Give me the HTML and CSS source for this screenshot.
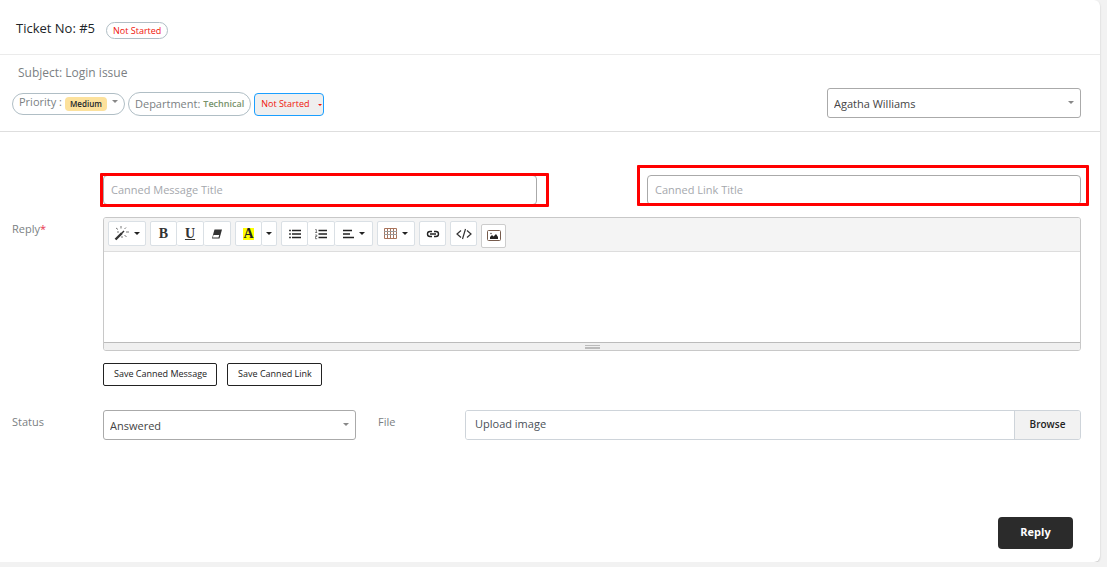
FILE: index.html
```html
<!DOCTYPE html>
<html lang="en">
<head>
  <meta charset="UTF-8" />
  <meta name="viewport" content="width=device-width, initial-scale=1" />
  <title>Ticket No: #5</title>
  <link rel="stylesheet" href="styles.css">
</head>
<body>
  <main class="card">
    <header class="card-header">
      <h1>Ticket No: #5</h1>
      <span class="pill-status">Not Started</span>
    </header>

    <section class="ticket-info">
      <div>
        <p class="subject">Subject: Login issue</p>
        <div class="ticket-meta">
          <div class="pill pill-priority">
            <label for="priority">Priority :</label>
            <span class="caret-wrap">
              <select id="priority" class="priority-select"><option>Medium</option></select>
            </span>
          </div>
          <div class="pill pill-department">Department: <span>Technical</span></div>
          <span class="caret-wrap caret-red">
            <select class="state-select" aria-label="Ticket state"><option>Not Started</option></select>
          </span>
        </div>
      </div>
      <span class="caret-wrap assignee">
        <select class="form-select" aria-label="Assignee"><option>Agatha Williams</option></select>
      </span>
    </section>

    <form class="reply-form">
      <div class="canned-row">
        <div class="marked marked-message">
          <input class="form-control" type="text" placeholder="Canned Message Title" aria-label="Canned Message Title">
        </div>
        <div class="marked marked-link">
          <input class="form-control" type="text" placeholder="Canned Link Title" aria-label="Canned Link Title">
        </div>
      </div>

      <div class="form-row">
        <label for="reply">Reply<span class="required">*</span></label>
        <div class="editor">
          <div class="toolbar">
            <div class="btn-group">
              <button type="button" class="wide" aria-label="Style">
                <svg width="15" height="15" viewBox="0 0 15 15"><path d="M1.5 13.5 8 7" stroke="#333" stroke-width="2.4"/><path d="M8 7l2-2" stroke="#333" stroke-width="1.4"/><path d="M7 0v2.500M2 2l2 1.500M12 1.500l-1.500 1.500M12 6h3M10.500 9l2 2M8 10v2M3 6h2" stroke="#777" stroke-width="1"/></svg>
                <i class="caret"></i>
              </button>
            </div>
            <div class="btn-group">
              <button type="button" class="letter" aria-label="Bold">B</button>
              <button type="button" class="letter underline" aria-label="Underline">U</button>
              <button type="button" aria-label="Clear formatting">
                <svg width="12" height="12" viewBox="0 0 12 12"><path d="M3.500 1.500H11L8.500 10.500H1z" fill="#333"/><path d="M2.500 7h5.700l-.7 2.500H1.900z" fill="#fff"/></svg>
              </button>
            </div>
            <div class="btn-group">
              <button type="button" class="letter" aria-label="Text color"><span class="highlight">A</span></button>
              <button type="button" class="narrow" aria-label="More colors"><i class="caret"></i></button>
            </div>
            <div class="btn-group">
              <button type="button" aria-label="Bullet list">
                <svg width="12" height="12" viewBox="0 0 12 12"><path d="M3 2.500h9M3 6h9M3 9.500h9" stroke="#222" stroke-width="1.600"/><path d="M0 2.500h2M0 6h2M0 9.500h2" stroke="#444" stroke-width="1.600"/></svg>
              </button>
              <button type="button" aria-label="Numbered list">
                <svg width="12" height="12" viewBox="0 0 12 12"><path d="M3.500 2.500H12M3.500 6H12M3.500 9.500H12" stroke="#222" stroke-width="1.600"/><path d="M.3 1.500h1v3M.2 4.500h2M.2 7h1.600v1.500H.4v2.200h1.800" fill="none" stroke="#555" stroke-width=".8"/></svg>
              </button>
              <button type="button" class="wide" aria-label="Paragraph">
                <svg width="12" height="12" viewBox="0 0 12 12"><path d="M1 2.500h9M1 6h7M1 9.500h11" stroke="#222" stroke-width="1.500"/></svg>
                <i class="caret"></i>
              </button>
            </div>
            <div class="btn-group">
              <button type="button" class="wide" aria-label="Table">
                <svg width="13" height="12" viewBox="0 0 13 12"><path d="M.5 .5h12v10H.5zM3.500 .5v10M6.500 .5v10M9.500 .5v10" fill="none" stroke="#a9745c"/><path d="M0 3.500h13M0 6.500h13" stroke="#999"/></svg>
                <i class="caret"></i>
              </button>
            </div>
            <div class="btn-group">
              <button type="button" aria-label="Link">
                <svg width="14" height="12" viewBox="0 0 14 12"><path d="M6 3.500H4a2.500 2.500 0 0 0 0 5h2M8 3.500h2a2.500 2.500 0 0 1 0 5H8M4 6h6" fill="none" stroke="#222" stroke-width="1.400"/></svg>
              </button>
            </div>
            <div class="btn-group">
              <button type="button" aria-label="Code view">
                <svg width="16" height="12" viewBox="0 0 16 12"><path d="M5 2.500 1 6l4 3.500M11 2.500 15 6l-4 3.500M9.500 1 6.500 11" fill="none" stroke="#333" stroke-width="1.200"/></svg>
              </button>
            </div>
            <div class="btn-group picture-group">
              <button type="button" aria-label="Picture">
                <svg width="14" height="12" viewBox="0 0 14 12"><rect x=".5" y=".5" width="13" height="10" rx="1" fill="#fff" stroke="#765b4c"/><path d="M3 9V7l2-2 1.500 1.500L9 4l2 3v2z" fill="#222"/><circle cx="4" cy="3.500" r=".8" fill="#555"/></svg>
              </button>
            </div>
          </div>
          <textarea id="reply"></textarea>
          <div class="resize-bar"><span></span></div>
        </div>
      </div>

      <div class="canned-actions">
        <button type="button">Save Canned Message</button>
        <button type="button">Save Canned Link</button>
      </div>

      <div class="status-row">
        <label for="status">Status</label>
        <span class="caret-wrap">
          <select id="status" class="form-select"><option>Answered</option></select>
        </span>
        <label class="file-label" for="file">File</label>
        <div class="file-field">
          <input id="file" type="text" value="Upload image" readonly>
          <button type="button">Browse</button>
        </div>
      </div>

      <div class="form-footer">
        <button type="submit" class="btn-reply">Reply</button>
      </div>
    </form>
  </main>
</body>
</html>
```
FILE: styles.css
```css
* {
  box-sizing: border-box;
}
body {
  margin: 0;
  background: #f2f2f2;
  color: #7b7f83;
  font-family: "Open Sans", sans-serif;
  font-size: 11px;
  line-height: 16px;
}
button, input, select, textarea {
  font: inherit;
  margin: 0;
}
.card {
  margin-right: 7px;
  background: #fff;
  border-radius: 0 6px 6px 0;
  box-shadow: 0 1px 2px rgba(0, 0, 0, 0.2);
}
.card-header {
  display: flex;
  align-items: center;
  gap: 11px;
  height: 55px;
  padding: 2px 16px 0;
  border-bottom: 1px solid #ebebeb;
}
h1 {
  margin: 0;
  color: #212529;
  font-size: 13px;
  font-weight: 400;
  line-height: 20px;
}
.pill-status {
  margin-top: 4px;
  padding: 0 6px;
  border: 1px solid #b0bec5;
  border-radius: 9px;
  color: #f0140a;
  font-size: 9px;
  line-height: 15px;
}

/* ticket details */
.ticket-info {
  display: flex;
  justify-content: space-between;
  align-items: flex-end;
  padding: 8px 19px 13px 12px;
  border-bottom: 1px solid #dedede;
}
.subject {
  margin: 0 0 9px;
  padding-left: 6px;
  font-size: 12px;
  line-height: 20px;
}
.ticket-meta {
  display: flex;
  align-items: center;
  gap: 3px;
  margin-bottom: 2px;
}
.pill {
  display: flex;
  align-items: center;
  border: 1px solid #b0bec5;
  border-radius: 12px;
  font-weight: 500;
}
.pill-priority {
  gap: 3px;
  height: 22px;
  padding: 0 5px 4px 6px;
}
.pill-department {
  gap: 3px;
  height: 24px;
  padding: 0 6px;
}
.pill-department span {
  color: #77926b;
  font-size: 9px;
  font-weight: 600;
}
.caret-wrap {
  position: relative;
  display: flex;
}
.caret-wrap::after {
  content: "";
  position: absolute;
  top: 50%;
  right: 7px;
  margin-top: -2px;
  border: 3px solid transparent;
  border-top-color: #888;
  border-bottom: 0;
  pointer-events: none;
}
.caret-red::after {
  right: 2px;
  margin-top: 0;
  border-width: 2px;
  border-bottom: 0;
  border-top-color: #f0140a;
}
select {
  appearance: none;
}
.priority-select {
  height: 14px;
  margin: 3px 12px 0 0;
  padding: 0 5px;
  border: 0;
  border-radius: 4px;
  background: #fce19c;
  color: #212529;
  font-size: 8px;
  font-weight: 600;
  line-height: 14px;
}
.pill-priority .caret-wrap::after {
  right: 1px;
}
.state-select {
  height: 23px;
  padding: 0 13px 0 6px;
  border: 1px solid #1a9fff;
  border-radius: 4px;
  background: #efefef;
  color: #f0140a;
  font-size: 9px;
}
.form-select {
  width: 100%;
  height: 30px;
  padding: 1px 20px 0 6px;
  border: 1px solid #aaa;
  border-radius: 3px;
  background: #fff;
  color: #444;
}
.assignee {
  width: 254px;
}

/* reply form */
.reply-form {
  padding: 43px 19px 13px 12px;
}
.canned-row {
  display: grid;
  grid-template-columns: 1fr 1fr;
  gap: 110px;
  margin: 0 0 12px 91px;
}
.marked {
  position: relative;
}
.marked::after {
  content: "";
  position: absolute;
  border: 3px solid #f00;
  border-radius: 1px;
  pointer-events: none;
}
.marked-message::after {
  inset: -2px -12px -2px -3px;
}
.marked-link::after {
  inset: -10px -8px -1px -10px;
}
.form-control {
  display: block;
  width: 100%;
  height: 30px;
  padding: 0 7px 2px;
  border: 1px solid #aaa;
  border-radius: 4px;
  background: #fff;
  color: #444;
}
.form-control::placeholder {
  color: #a5a8ad;
}
.form-row {
  display: grid;
  grid-template-columns: 91px 1fr;
}
.form-row label {
  padding-top: 4px;
}
.required {
  color: #e8344e;
}
.editor {
  border: 1px solid #c8c8c8;
  border-radius: 3px;
  overflow: hidden;
}
.toolbar {
  display: flex;
  gap: 4px;
  height: 34px;
  padding: 3px 4px;
  background: #f4f4f4;
  border-bottom: 1px solid #ddd;
}
.btn-group {
  display: flex;
  height: 25px;
}
.btn-group button {
  display: flex;
  align-items: center;
  justify-content: center;
  width: 27px;
  padding: 0;
  border: 1px solid #dae0e5;
  border-radius: 2px;
  background: #fff;
  color: #333;
}
.btn-group button + button {
  border-left: 0;
}
.btn-group .wide {
  gap: 5px;
  width: 38px;
}
.btn-group .narrow {
  width: 15px;
}
.btn-group .letter {
  font-family: "Liberation Serif", serif;
  font-size: 14px;
  font-weight: 700;
}
.btn-group .underline {
  text-decoration: underline;
}
.highlight {
  background: #ff0;
  color: #222;
  line-height: 12px;
}
.caret {
  border: 3px solid transparent;
  border-top-color: #222;
  border-bottom: 0;
}
.picture-group {
  margin-top: 3px;
}
.picture-group button {
  width: 25px;
  height: 24px;
  border-color: #ccc;
}
textarea {
  display: block;
  width: 100%;
  height: 90px;
  padding: 10px;
  border: 0;
  resize: none;
  outline: 0;
}
.resize-bar {
  display: flex;
  justify-content: center;
  height: 8px;
  padding-top: 2px;
  border-top: 1px solid #bbb;
  background: #f0f0f0;
}
.resize-bar span {
  width: 15px;
  height: 4px;
  border: solid #bbb;
  border-width: 1px 0 2px;
}
.canned-actions {
  display: flex;
  gap: 10px;
  margin: 12px 0 24px 91px;
}
.canned-actions button {
  height: 23px;
  padding: 0 9px 2px 10px;
  border: 1px solid #222;
  border-radius: 2px;
  background: #fff;
  color: #222;
  font-size: 9px;
}
.status-row {
  display: grid;
  grid-template-columns: 91px 253fr 109px 616fr;
}
.status-row label {
  padding-top: 4px;
}
.status-row .file-label {
  padding-left: 22px;
}
.file-field {
  display: flex;
  height: 30px;
  border: 1px solid #ced4da;
  border-radius: 3px;
  overflow: hidden;
}
.file-field input {
  flex: 1;
  min-width: 0;
  padding: 0 9px 2px;
  border: 0;
  color: #495057;
}
.file-field button {
  width: 66px;
  padding: 0 0 2px;
  border: 0;
  border-left: 1px solid #ced4da;
  background: #f2f2f2;
  color: #222;
  font-size: 10px;
  font-weight: 600;
}
.form-footer {
  display: flex;
  justify-content: flex-end;
  padding: 77px 8px 0 0;
}
.btn-reply {
  width: 75px;
  height: 32px;
  padding: 0 0 2px;
  border: 0;
  border-radius: 4px;
  background: #2b2b2b;
  color: #fff;
  font-weight: 700;
}
```
